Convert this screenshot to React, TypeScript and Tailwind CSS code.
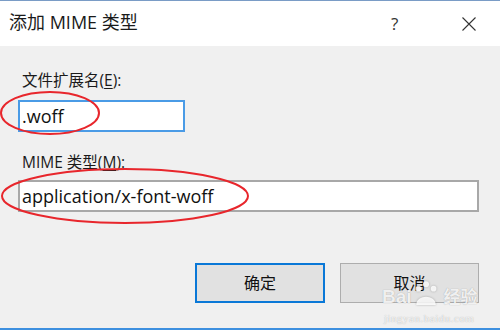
import React from "react";

const font = { fontFamily: '"Open Sans", "Noto Sans CJK SC", sans-serif' };

function Ellipses() {
    return (
        <svg className="absolute left-0 top-0 pointer-events-none" width="500" height="330">
            <ellipse cx="50" cy="113" rx="49" ry="21" fill="none" stroke="#e8262c" strokeWidth="2" />
            <ellipse cx="125" cy="196" rx="123" ry="27" fill="none" stroke="#e8262c" strokeWidth="2" />
        </svg>
    );
}

// faint baidu jingyan watermark over the cancel button
function Watermark() {
    return (
        <div className="absolute left-[382px] top-[280px] flex flex-col items-start text-white/85 pointer-events-none [text-shadow:0_0_1px_rgba(0,0,0,0.35)]">
            <div className="flex items-end text-[19px] font-bold leading-none" style={{ fontFamily: '"Liberation Sans", "Noto Sans CJK SC", sans-serif' }}>
                <span>Bai</span>
                <svg width="26" height="26" viewBox="0 0 24 24" className="mx-[1px] drop-shadow-[0_0_1px_rgba(0,0,0,0.3)]">
                    <circle cx="5" cy="8" r="2.6" fill="currentColor" />
                    <circle cx="12" cy="4" r="2.8" fill="currentColor" />
                    <circle cx="19" cy="8" r="2.6" fill="currentColor" />
                    <path d="M3 23 C3 13 21 13 21 23 Z" fill="currentColor" />
                </svg>
                <span className="text-[17px] ml-1">经验</span>
            </div>
            <div className="text-[11px] mt-[4px] ml-[2px] tracking-[0.5px]" style={{ fontFamily: '"Liberation Serif", serif' }}>jingyan.baidu.com</div>
        </div>
    );
}

export default function App() {
    return (
        <div className="relative w-[500px] h-[330px] overflow-hidden bg-[#f0f0f0] text-[#000]" style={font}>
            <div className="h-[46px] bg-white border-t border-[#7a9cc6] flex items-center">
                <div className="pl-[9px] text-[18px] text-[#1a1a1a] flex-1 -mt-[2px]">添加 MIME 类型</div>
                <div className="w-[14px] text-[17px] text-[#333] mr-[56px]">?</div>
                <svg width="16" height="16" viewBox="0 0 16 16" className="mr-[23px]">
                    <path d="M1.5 1.5 L14.5 14.5 M14.5 1.5 L1.5 14.5" stroke="#333" strokeWidth="1.1" />
                </svg>
            </div>

            <div className="flex flex-col pl-[18px] pr-[21px]">
                <div className="mt-[24px] h-[20px] pl-[4px] text-[15.5px] leading-[20px] text-[#1a1a1a]">
                    文件扩展名(<span className="underline underline-offset-2">E</span>):
                </div>
                <div className="mt-[10px] w-[167px] h-[32px] bg-white border-2 border-[#4a9be6] flex items-center pl-[2px] text-[18px] text-[#111]">
                    .woff
                </div>

                <div className="mt-[20px] h-[20px] pl-[4px] text-[15.5px] leading-[20px] text-[#1a1a1a]">
                    MIME 类型(<span className="underline underline-offset-2">M</span>):
                </div>
                <div className="mt-[8px] w-[461px] h-[32px] bg-white border-2 border-[#a8a8a8] flex items-center pl-[2px] text-[18px] text-[#111]">
                    application/x-font-woff
                </div>

                <div className="mt-[51px] flex gap-[15px] pl-[177px]">
                    <div className="w-[130px] h-[40px] bg-[#e1e1e1] border-2 border-[#0a78d7] flex items-center justify-center text-[16px] text-[#111]">
                        确定
                    </div>
                    <div className="w-[139px] h-[40px] bg-[#e1e1e1] border border-[#adadad] flex items-center justify-center text-[16px] text-[#111]">
                        取消
                    </div>
                </div>
            </div>

            <div className="absolute left-0 bottom-0 w-full h-[2px] bg-[#3d8fdf]" />
            <Ellipses />
            <Watermark />
        </div>
    );
}
